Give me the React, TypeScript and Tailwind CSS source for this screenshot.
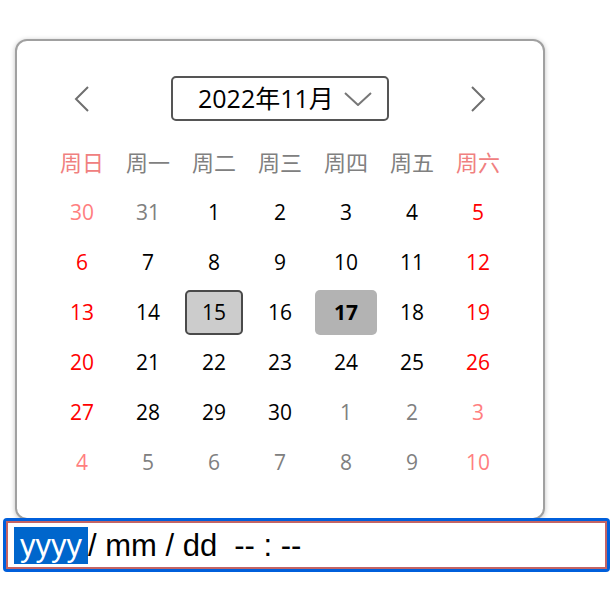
import React from "react";

type Day = { n: number; kind: "cur" | "other"; weekend: boolean };

const WEEKDAYS = ["周日", "周一", "周二", "周三", "周四", "周五", "周六"];

function buildDays(): Day[] {
  const days: Day[] = [];
  // Nov 2022 starts on Tuesday
  days.push({ n: 30, kind: "other", weekend: true });
  days.push({ n: 31, kind: "other", weekend: false });
  for (let d = 1; d <= 30; d++) {
    const col = days.length % 7;
    days.push({ n: d, kind: "cur", weekend: col === 0 || col === 6 });
  }
  let d = 1;
  while (days.length < 42) {
    const col = days.length % 7;
    days.push({ n: d++, kind: "other", weekend: col === 0 || col === 6 });
  }
  return days;
}

function dayColor(day: Day) {
  if (day.kind === "other") return day.weekend ? "text-[#ff7f7f]" : "text-[#808080]";
  return day.weekend ? "text-[#ff0000]" : "text-black";
}

function Chevron({ dir }: { dir: "left" | "right" }) {
  return (
    <svg width="16" height="26" viewBox="0 0 16 26" fill="none">
      <path
        d={dir === "left" ? "M14 1 L2 13 L14 25" : "M2 1 L14 13 L2 25"}
        stroke="#6f6f6f"
        strokeWidth="2"
      />
    </svg>
  );
}

export default function App() {
  const days = buildDays();

  return (
    <div className="flex flex-col w-[613px] h-[589px] bg-white font-['Open_Sans','Noto_Sans_CJK_SC',sans-serif]">
      {/* picker popup */}
      <div className="ml-[15px] mt-[39px] w-[530px] h-[481px] rounded-[12px] border-2 border-[#a0a0a0] bg-white shadow-[0_1px_5px_rgba(0,0,0,0.25)] px-[34px] pt-[35px]">
        <div className="flex items-center justify-between h-[45px]">
          <div className="w-[62px] flex justify-center">
            <Chevron dir="left" />
          </div>
          <div className="w-[218px] h-[45px] rounded-[5px] border-2 border-[#555] flex items-center justify-between pl-[25px] pr-[15px]">
            <span className="text-[25px] text-black leading-none">2022年11月</span>
            <svg width="28" height="14" viewBox="0 0 28 14" fill="none">
              <path d="M1 1 L14 13 L27 1" stroke="#777" strokeWidth="2" />
            </svg>
          </div>
          <div className="w-[62px] flex justify-center">
            <Chevron dir="right" />
          </div>
        </div>

        <div className="mt-[19px] grid grid-cols-[repeat(7,62px)] gap-x-[4px] gap-y-[5px]">
          {WEEKDAYS.map((w, i) => (
            <div
              key={w}
              className={`h-[45px] flex items-center justify-center text-[22px] ${
                i === 0 || i === 6 ? "text-[#f08080]" : "text-[#808080]"
              }`}
            >
              {w}
            </div>
          ))}
          {days.map((day, i) => {
            const selected = day.kind === "cur" && day.n === 15;
            const today = day.kind === "cur" && day.n === 17;
            return (
              <div
                key={i}
                className={`h-[45px] flex items-center justify-center text-[21px] rounded-[5px] ${dayColor(day)} ${
                  selected ? "border-2 border-[#4a4a4a] bg-[#cccccc] mx-[2px]" : ""
                } ${today ? "bg-[#b3b3b3] font-bold" : ""}`}
              >
                {day.n}
              </div>
            );
          })}
        </div>
      </div>

      {/* datetime input */}
      <div className="ml-[3px] mt-[-2px] w-[607px] h-[54px] rounded-[4px] border-[3px] border-[#005fdb] bg-white">
        <div className="h-full border-2 border-[#c46464] flex items-center pl-[6px] font-['Liberation_Sans',sans-serif] text-[31px] text-black leading-none">
          <span className="bg-[#0066cc] text-white px-[6px] h-[37px] flex items-center">yyyy</span>
          <span>/ mm / dd</span>
          <span className="ml-[17px]">-- : --</span>
        </div>
      </div>
    </div>
  );
}
